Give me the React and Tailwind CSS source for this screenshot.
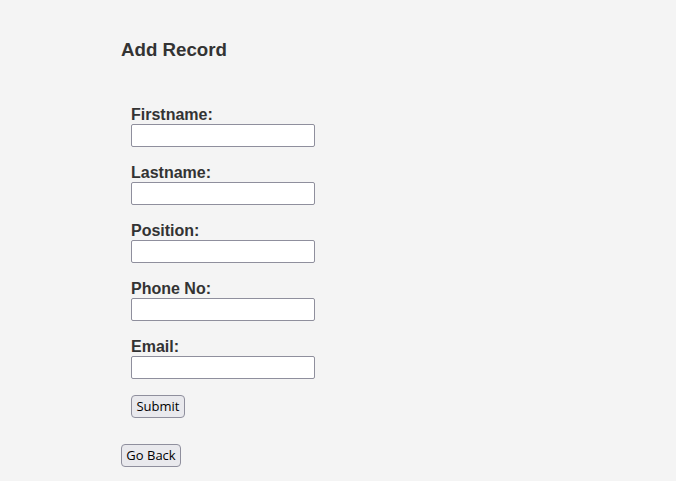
import React from "react";

const fields = ["Firstname:", "Lastname:", "Position:", "Phone No:", "Email:"];

function App() {
  return (
    <div className="min-h-[481px] bg-[#f4f4f4] text-[#333] pt-[39px] pl-[121px]" style={{ fontFamily: '"Liberation Sans", Arial, sans-serif' }}>
      <h3 className="text-[18.72px] font-bold leading-[22px]">Add Record</h3>

      <form className="mt-[44px] pl-[10px]" onSubmit={(e) => e.preventDefault()}>
        {fields.map((f, i) => (
          <div key={i} className="mb-[16px]">
            <label className="block text-[16px] font-bold leading-[19px]">{f}</label>
            <input
              type="text"
              className="block w-[184px] h-[23px] bg-white border border-[#8f8f9d] rounded-[2px]"
            />
          </div>
        ))}
        <button
          type="submit"
          className="block h-[23px] w-[54px] bg-[#e9e9ed] border border-[#8f8f9d] rounded-[4px] text-[13px] text-black leading-none"
          style={{ fontFamily: '"Open Sans", sans-serif' }}
        >
          Submit
        </button>
      </form>

      <button
        className="block mt-[26px] h-[23px] w-[60px] bg-[#e9e9ed] border border-[#8f8f9d] rounded-[4px] text-[13px] text-black leading-none"
        style={{ fontFamily: '"Open Sans", sans-serif' }}
      >
        Go Back
      </button>
    </div>
  );
}

export default App;
